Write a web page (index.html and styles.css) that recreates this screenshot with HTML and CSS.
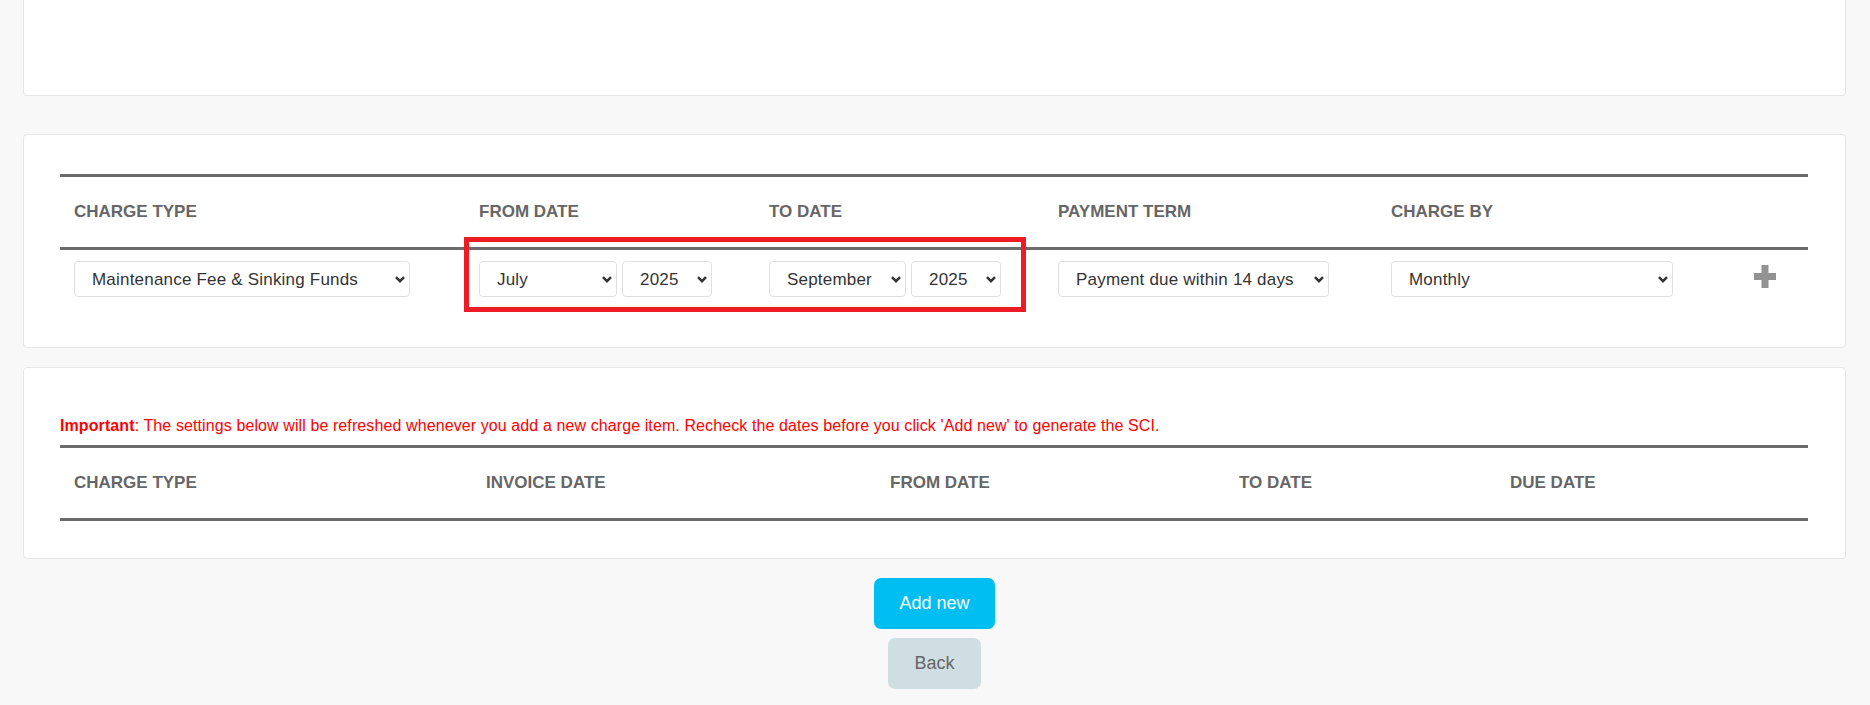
FILE: index.html
```html
<!DOCTYPE html>
<html lang="en">
  <head>
    <meta charset="UTF-8" />
    <title>Add Charge Item</title>
    <link rel="stylesheet" href="styles.css">
  </head>
  <body>
    <div class="page">
      <div class="card card-top"></div>

      <div class="card card-charge">
        <table class="charge-table">
          <colgroup>
            <col style="width: 405px" />
            <col style="width: 290px" />
            <col style="width: 289px" />
            <col style="width: 333px" />
            <col style="width: 345px" />
            <col style="width: 86px" />
          </colgroup>
          <thead>
            <tr>
              <th>Charge Type</th>
              <th>From Date</th>
              <th>To Date</th>
              <th>Payment Term</th>
              <th>Charge By</th>
              <th></th>
            </tr>
          </thead>
          <tbody>
            <tr>
              <td>
                <span class="sel-wrap">
                  <select class="sel sel-type">
                    <option selected>Maintenance Fee &amp; Sinking Funds</option>
                    <option>Maintenance Fee</option>
                    <option>Sinking Funds</option>
                  </select>
                  <svg class="caret" width="10" height="7" viewBox="0 0 10 7"><path d="M1 1.2l4 4 4-4" /></svg>
                </span>
              </td>
              <td>
                <div class="date-pair">
                  <span class="sel-wrap">
                    <select class="sel sel-month">
                      <option>January</option>
                      <option>February</option>
                      <option>March</option>
                      <option>April</option>
                      <option>May</option>
                      <option>June</option>
                      <option selected>July</option>
                      <option>August</option>
                      <option>September</option>
                      <option>October</option>
                      <option>November</option>
                      <option>December</option>
                    </select>
                    <svg class="caret" width="10" height="7" viewBox="0 0 10 7"><path d="M1 1.2l4 4 4-4" /></svg>
                  </span>
                  <span class="sel-wrap">
                    <select class="sel sel-year">
                      <option>2024</option>
                      <option selected>2025</option>
                      <option>2026</option>
                    </select>
                    <svg class="caret" width="10" height="7" viewBox="0 0 10 7"><path d="M1 1.2l4 4 4-4" /></svg>
                  </span>
                </div>
              </td>
              <td>
                <div class="date-pair">
                  <span class="sel-wrap">
                    <select class="sel sel-month sel-month-to">
                      <option>January</option>
                      <option>February</option>
                      <option>March</option>
                      <option>April</option>
                      <option>May</option>
                      <option>June</option>
                      <option>July</option>
                      <option>August</option>
                      <option selected>September</option>
                      <option>October</option>
                      <option>November</option>
                      <option>December</option>
                    </select>
                    <svg class="caret" width="10" height="7" viewBox="0 0 10 7"><path d="M1 1.2l4 4 4-4" /></svg>
                  </span>
                  <span class="sel-wrap">
                    <select class="sel sel-year">
                      <option>2024</option>
                      <option selected>2025</option>
                      <option>2026</option>
                    </select>
                    <svg class="caret" width="10" height="7" viewBox="0 0 10 7"><path d="M1 1.2l4 4 4-4" /></svg>
                  </span>
                </div>
              </td>
              <td>
                <span class="sel-wrap">
                  <select class="sel sel-term">
                    <option>Payment due within 7 days</option>
                    <option selected>Payment due within 14 days</option>
                    <option>Payment due within 30 days</option>
                  </select>
                  <svg class="caret" width="10" height="7" viewBox="0 0 10 7"><path d="M1 1.2l4 4 4-4" /></svg>
                </span>
              </td>
              <td>
                <span class="sel-wrap">
                  <select class="sel sel-by">
                    <option selected>Monthly</option>
                    <option>Quarterly</option>
                    <option>Yearly</option>
                  </select>
                  <svg class="caret" width="10" height="7" viewBox="0 0 10 7"><path d="M1 1.2l4 4 4-4" /></svg>
                </span>
              </td>
              <td class="add-cell">
                <span class="add-icon" title="Add">
                  <svg width="22" height="23" viewBox="0 0 22 23">
                    <rect x="0" y="8" width="22" height="7" fill="#929292" />
                    <rect x="7.5" y="0" width="7" height="23" fill="#929292" />
                  </svg>
                </span>
              </td>
            </tr>
          </tbody>
        </table>
        <div class="highlight"></div>
      </div>

      <div class="card card-list">
        <p class="notice"><b>Important</b>: The settings below will be refreshed whenever you add a new charge item. Recheck the dates before you click 'Add new' to generate the SCI.</p>
        <table class="list-table">
          <colgroup>
            <col style="width: 412px" />
            <col style="width: 404px" />
            <col style="width: 349px" />
            <col style="width: 271px" />
            <col style="width: 312px" />
          </colgroup>
          <thead>
            <tr>
              <th>Charge Type</th>
              <th>Invoice Date</th>
              <th>From Date</th>
              <th>To Date</th>
              <th>Due Date</th>
            </tr>
          </thead>
          <tbody></tbody>
        </table>
      </div>

      <div class="actions">
        <button class="btn btn-add">Add new</button>
        <button class="btn btn-back">Back</button>
      </div>
    </div>
  </body>
</html>
```

FILE: styles.css
```css
html,
body {
  margin: 0;
  background-color: #f8f8f8;
  font-family: "Liberation Sans", Arial, sans-serif;
  color: #333;
}

.page {
  padding: 0 24px 0 23px;
}

.card {
  position: relative;
  background-color: #fff;
  border: 1px solid #e6e6e6;
  border-radius: 4px;
  padding: 0 37px 0 36px;
}
.card-top {
  height: 95px;
  border-top: none;
  border-radius: 0 0 4px 4px;
}
.card-charge {
  margin-top: 38px;
  padding-top: 39px;
  padding-bottom: 39px;
}
.card-list {
  margin-top: 19px;
  padding-top: 49px;
  padding-bottom: 37px;
}

table {
  width: 100%;
  table-layout: fixed;
  border-collapse: collapse;
}
th {
  padding: 25px 14px;
  line-height: 20px;
  font-size: 17px;
  font-weight: bold;
  text-transform: uppercase;
  text-align: left;
  color: #666;
  border-top: 3px solid #6b6b6b;
  border-bottom: 3px solid #6b6b6b;
}
td {
  padding: 11px 14px;
  vertical-align: top;
}

.sel-wrap {
  position: relative;
  display: inline-block;
}
.sel {
  display: block;
  height: 36px;
  padding: 0 24px 0 17px;
  font-family: inherit;
  font-size: 17px;
  letter-spacing: 0.2px;
  color: #333;
  background-color: #fff;
  border: 1px solid #e0e0e0;
  border-radius: 4px;
  outline: none;
  appearance: none;
  -webkit-appearance: none;
}
.caret {
  position: absolute;
  right: 5px;
  top: 15px;
  pointer-events: none;
}
.caret path {
  fill: none;
  stroke: #333;
  stroke-width: 2.5;
}
.sel-type {
  width: 336px;
}
.date-pair {
  display: flex;
  gap: 5px;
}
.sel-month {
  width: 138px;
}
.sel-month-to {
  width: 137px;
}
.sel-year {
  width: 90px;
}
.sel-term {
  width: 271px;
}
.sel-by {
  width: 282px;
}

.add-cell {
  padding-top: 15px;
  text-align: center;
}
.add-icon {
  display: inline-block;
  cursor: pointer;
}
.add-icon svg {
  display: block;
}

.highlight {
  position: absolute;
  left: 440px;
  top: 102px;
  width: 562px;
  height: 75px;
  box-sizing: border-box;
  border: 5px solid #ed1c24;
  pointer-events: none;
}

.notice {
  margin: 0 0 11px;
  font-size: 16px;
  line-height: 17px;
  letter-spacing: 0.1px;
  color: #ff0000;
}

.actions {
  display: flex;
  flex-direction: column;
  align-items: center;
  gap: 9px;
  padding-top: 19px;
}
.btn {
  height: 51px;
  padding: 0 25px;
  border: none;
  border-radius: 7px;
  font-family: inherit;
  font-size: 18px;
  cursor: pointer;
  outline: none;
}
.btn-add {
  background-color: #00bef2;
  color: #fff;
}
.btn-back {
  padding: 0 26px;
  background-color: #cfdee3;
  color: #666;
}
```
